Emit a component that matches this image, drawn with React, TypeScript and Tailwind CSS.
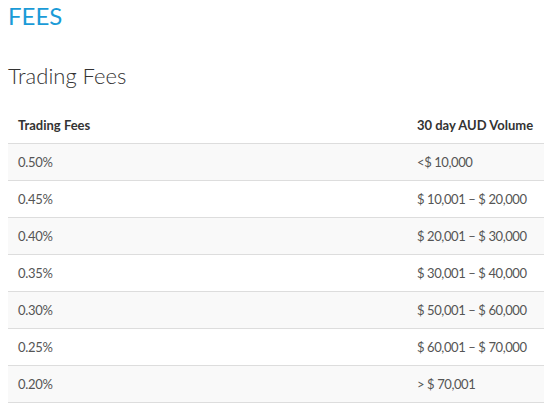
import React from "react";

const rows: [string, string][] = [
  ["0.50%", "<$ 10,000"],
  ["0.45%", "$ 10,001 – $ 20,000"],
  ["0.40%", "$ 20,001 – $ 30,000"],
  ["0.35%", "$ 30,001 – $ 40,000"],
  ["0.30%", "$ 50,001 – $ 60,000"],
  ["0.25%", "$ 60,001 – $ 70,000"],
  ["0.20%", "> $ 70,001"],
];

export default function App() {
  return (
    <div className="w-[544px] h-[415px] overflow-hidden bg-white pl-2">
      <h1 className="text-[24px] leading-[26px] pt-[3px] text-[#1a9bd7] font-['Lato',sans-serif] font-normal">
        FEES
      </h1>
      <h2 className="text-[22px] leading-[24px] mt-[35px] text-[#333] font-['Lato',sans-serif] font-light">
        Trading Fees
      </h2>
      <table className="mt-[19px] w-[536px] table-fixed border-collapse font-['Lato',sans-serif] text-[13px] whitespace-nowrap">
        <colgroup>
          <col className="w-[399px]" />
          <col />
        </colgroup>
        <thead>
          <tr className="border-b border-[#dddddd]">
            <th className="text-left font-bold text-[#333] px-[10px] py-[8px] leading-[20px]">
              Trading Fees
            </th>
            <th className="text-left font-bold text-[#333] px-[10px] py-[8px] leading-[20px]">
              30 day AUD Volume
            </th>
          </tr>
        </thead>
        <tbody>
          {rows.map(([a, b], i) => (
            <tr
              key={a}
              className={`border-b border-[#dddddd] ${i % 2 === 0 ? "bg-[#f9f9f9]" : "bg-white"}`}
            >
              <td className="px-[10px] py-[8px] leading-[20px] text-[#555] tracking-[-0.3px]">{a}</td>
              <td className="px-[10px] py-[8px] leading-[20px] text-[#555] tracking-[-0.4px]">{b}</td>
            </tr>
          ))}
        </tbody>
      </table>
    </div>
  );
}
